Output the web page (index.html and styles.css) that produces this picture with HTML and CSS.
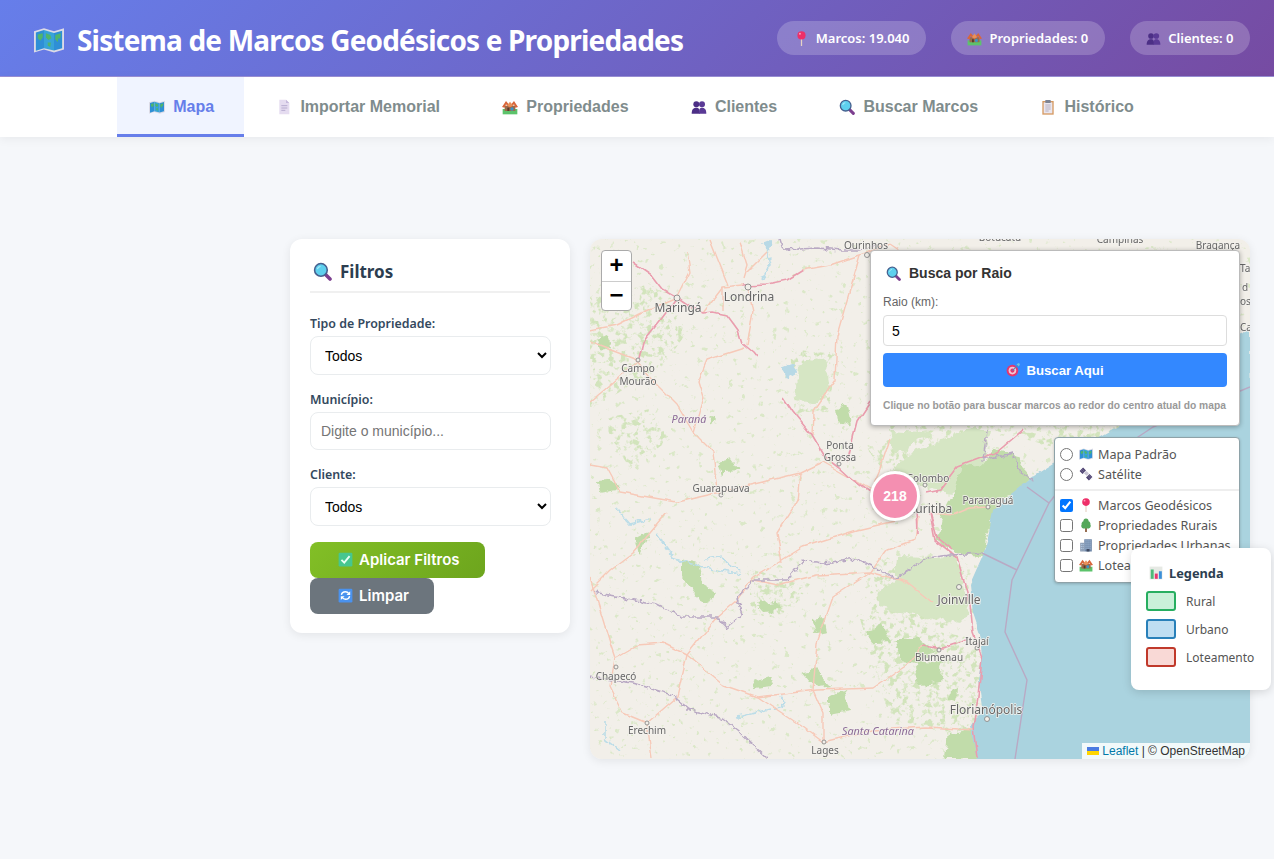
FILE: index.html
```html
<!DOCTYPE html>
<html lang="pt-BR">
<head>
<meta charset="utf-8">
<title>Sistema de Marcos Geodésicos e Propriedades</title>
<link rel="stylesheet" href="styles.css">
</head>
<body>
<svg class="sprites" xmlns="http://www.w3.org/2000/svg" aria-hidden="true">
  <symbol id="i-map" viewBox="0 0 24 24">
    <path fill="#dcdbe6" d="M0 5 8 2.5 16 5 24 2.5V19.5L16 22 8 19.5 0 22Z"/>
    <path fill="#2e8fd6" d="M1.5 6 8 4V18.5L1.5 20.5Z"/>
    <path fill="#38a3d9" d="M8 4 16 6.4V20.4L8 18.5Z"/>
    <path fill="#2e8fd6" d="M16 6.4 22.5 4.5V18.5L16 20.4Z"/>
    <path fill="#4fb56c" d="M3 7.5 7 6.5 7 10 5 12.5 3 10.5ZM9.5 6.5 13 8 14 10.5 11.5 12 9.5 10ZM11 14 13.5 14 13 17.5 11 16.5ZM17 8 21.5 6.5 21 11 19.5 10.5 19 13.5 17 11.5Z"/>
  </symbol>
  <symbol id="i-doc" viewBox="0 0 24 24">
    <path fill="#e5dcf0" d="M5 1H15L20 6V23H5Z"/>
    <path fill="#c6b9dc" d="M15 1 20 6H15Z"/>
    <path stroke="#b4a8cc" stroke-width="1.4" d="M8 10H17M8 13.5H17M8 17H14"/>
  </symbol>
  <symbol id="i-houses" viewBox="0 0 24 24">
    <path fill="#5cc36b" d="M1 15H23V23H1Z"/>
    <path fill="#9a6a4a" d="M4 10H20V18H4Z"/>
    <path fill="#d9663a" d="M0 12 6 3 11 9 13 9 18 3 24 12 20 13 18 8 14 12H10L6 8 4 13Z"/>
    <path fill="#e8925a" d="M9 8 12 4 15 8 16 10 12 12 8 10Z"/>
    <circle cx="15" cy="15" r="2.5" fill="#3a94c8"/>
    <path fill="#5b3a2a" d="M8 13H11V18H8Z"/>
  </symbol>
  <symbol id="i-people" viewBox="0 0 24 24">
    <circle cx="8" cy="8" r="4.5" fill="#4c2f86"/>
    <circle cx="16.5" cy="8" r="4.5" fill="#5a3a96"/>
    <path fill="#4c2f86" d="M1 22C1 15 4 13 8 13S13 15 13 22Z"/>
    <path fill="#5a3a96" d="M12 22C12 15 13 13 16.5 13S23 15 23 22Z"/>
  </symbol>
  <symbol id="i-search" viewBox="0 0 24 24">
    <path stroke="#7c3f8f" stroke-width="4.5" stroke-linecap="round" d="M15.5 15.5 21.5 21.5"/>
    <circle cx="10" cy="10" r="8" fill="#5ed0ee" stroke="#46608f" stroke-width="2"/>
    <path stroke="#a8eafa" stroke-width="1.6" fill="none" d="M5.5 9C6 7 7.5 5.8 9.5 5.5"/>
  </symbol>
  <symbol id="i-clip" viewBox="0 0 24 24">
    <path fill="#d69a62" d="M3.5 3H20.5V23.5H3.5Z"/>
    <path fill="#e9e6ef" d="M5.5 5H18.500V21.500H5.500Z"/>
    <path stroke="#a9a3b8" stroke-width="1.2" d="M8 9H16M8 12H16M8 15H16M8 18H13"/>
    <path fill="#7d8494" d="M8 1.500H16V6H8Z"/>
  </symbol>
  <symbol id="i-pin" viewBox="0 0 24 24">
    <path stroke="#e6d3c5" stroke-width="2" d="M12 10V24"/>
    <circle cx="12" cy="7" r="6.500" fill="#ee2f68"/>
    <circle cx="9.500" cy="4.500" r="1.600" fill="#ff9ab8"/>
  </symbol>
  <symbol id="i-check" viewBox="0 0 24 24">
    <rect x="1" y="1" width="22" height="22" rx="2" fill="#46c690"/>
    <path fill="none" stroke="#e8fff4" stroke-width="3" d="M5.500 12.500 10 17 18.500 6.500"/>
  </symbol>
  <symbol id="i-sync" viewBox="0 0 24 24">
    <rect x="1" y="1" width="22" height="22" rx="2" fill="#4a92ee"/>
    <path fill="none" stroke="#fff" stroke-width="2.200" d="M5.500 11C6 7.500 9 6 12 6 14.500 6 16 7 17.500 9M18.500 13C18 16.500 15 18 12 18 9.500 18 8 17 6.500 15"/>
    <path fill="#fff" d="M19.500 5V11H13.500ZM4.500 19V13H10.500Z"/>
  </symbol>
  <symbol id="i-target" viewBox="0 0 24 24">
    <circle cx="11" cy="13" r="10" fill="#e5366e"/>
    <circle cx="11" cy="13" r="6.500" fill="#f4c7d5"/>
    <circle cx="11" cy="13" r="3.500" fill="#e5366e"/>
    <path stroke="#4a8fb8" stroke-width="1.800" d="M11 13 21 3"/>
    <path fill="#6fc4dc" d="M18 2 22 0 24 2 22 6Z"/>
  </symbol>
  <symbol id="i-sat" viewBox="0 0 24 24">
    <path fill="#4e4272" d="M1 7 7 1 12 6 6 12ZM12 18 18 12 23 17 17 23Z"/>
    <path fill="#c8c4d4" d="M9 11 13 7 17 11 13 15Z"/>
    <path stroke="#8e88a4" stroke-width="1" d="M3.500 5.500 9 11M5.500 3.500 11 9M14.500 15.500 20 21M16.500 13.500 22 19"/>
  </symbol>
  <symbol id="i-tree" viewBox="0 0 24 24">
    <path fill="#8a5a3a" d="M10.500 16H13.500V24H10.500Z"/>
    <path fill="#55a85a" d="M12 1C15 1 16.500 3.500 16.500 5.500 19 6.500 20 9 19.500 11 21 13 20 17 17 18H7C4 17 3 13 4.500 11 4 9 5 6.500 7.500 5.500 7.500 3.500 9 1 12 1Z"/>
  </symbol>
  <symbol id="i-building" viewBox="0 0 24 24">
    <path fill="#8b9bb2" d="M2 8H9V23H2Z"/>
    <path fill="#6f87a8" d="M9 2H22V23H9Z"/>
    <path stroke="#bcd4ee" stroke-width="1.600" stroke-dasharray="2 1.400" d="M12 4V21M15.500 4V21M19 4V21M4 10V21M7 10V21"/>
    <path fill="#3f4a62" d="M13 19H18V23H13Z"/>
  </symbol>
  <symbol id="i-chart" viewBox="0 0 24 24">
    <rect x="1" y="1" width="22" height="22" fill="#e6e9e4"/>
    <path fill="#4dbb78" d="M3 6H8V22H3Z"/>
    <path fill="#e8376f" d="M10 13H15V22H10Z"/>
    <path fill="#3b8fd8" d="M17 9H22V22H17Z"/>
  </symbol>
  <filter id="speckle" x="0" y="0" width="100%" height="100%">
    <feTurbulence type="fractalNoise" baseFrequency="0.16" numOctaves="3" seed="4" result="n"/>
    <feColorMatrix in="n" type="matrix" values="0 0 0 0 0 0 0 0 0 0 0 0 0 0 0 7 0 0 0 -3.700" result="m"/>
    <feComposite in="SourceGraphic" in2="m" operator="in"/>
    <feGaussianBlur stdDeviation="0.5"/>
  </filter>
  <filter id="sparse" x="0" y="0" width="100%" height="100%">
    <feTurbulence type="fractalNoise" baseFrequency="0.16" numOctaves="3" seed="11" result="n"/>
    <feColorMatrix in="n" type="matrix" values="0 0 0 0 0 0 0 0 0 0 0 0 0 0 0 9 0 0 0 -6.000" result="m"/>
    <feComposite in="SourceGraphic" in2="m" operator="in"/>
    <feGaussianBlur stdDeviation="0.5"/>
  </filter>
  <filter id="organic" x="-5%" y="-5%" width="110%" height="110%">
    <feTurbulence type="fractalNoise" baseFrequency="0.09" numOctaves="3" seed="7" result="n"/>
    <feDisplacementMap in="SourceGraphic" in2="n" scale="11" xChannelSelector="R" yChannelSelector="G"/>
    <feGaussianBlur stdDeviation="0.6"/>
  </filter>
  <filter id="wobble" x="-5%" y="-5%" width="110%" height="110%">
    <feTurbulence type="fractalNoise" baseFrequency="0.07" numOctaves="2" seed="3" result="n"/>
    <feDisplacementMap in="SourceGraphic" in2="n" scale="5" xChannelSelector="R" yChannelSelector="G"/>
  </filter>
  <filter id="wiggle" x="-5%" y="-5%" width="110%" height="110%">
    <feTurbulence type="fractalNoise" baseFrequency="0.18" numOctaves="2" seed="9" result="n"/>
    <feDisplacementMap in="SourceGraphic" in2="n" scale="7" xChannelSelector="R" yChannelSelector="G"/>
  </filter>
</svg>
<header class="header">
  <h1 class="title"><svg class="ico ico-title"><use href="#i-map"/></svg>Sistema de Marcos Geodésicos e Propriedades</h1>
  <div class="stats">
    <span class="stat"><svg class="ico ico-stat"><use href="#i-pin"/></svg>Marcos: 19.040</span>
    <span class="stat"><svg class="ico ico-stat"><use href="#i-houses"/></svg>Propriedades: 0</span>
    <span class="stat"><svg class="ico ico-stat"><use href="#i-people"/></svg>Clientes: 0</span>
  </div>
</header>
<nav class="tabs">
  <a class="tab active"><svg class="ico ico-tab"><use href="#i-map"/></svg>Mapa</a>
  <a class="tab"><svg class="ico ico-tab"><use href="#i-doc"/></svg>Importar Memorial</a>
  <a class="tab"><svg class="ico ico-tab"><use href="#i-houses"/></svg>Propriedades</a>
  <a class="tab"><svg class="ico ico-tab"><use href="#i-people"/></svg>Clientes</a>
  <a class="tab"><svg class="ico ico-tab"><use href="#i-search"/></svg>Buscar Marcos</a>
  <a class="tab"><svg class="ico ico-tab"><use href="#i-clip"/></svg>Histórico</a>
</nav>
<main class="main">
  <aside class="filters">
    <h2 class="filters-title"><svg class="ico ico-filter"><use href="#i-search"/></svg>Filtros</h2>
    <label class="field-label">Tipo de Propriedade:</label>
    <select class="field"><option>Todos</option></select>
    <label class="field-label">Município:</label>
    <input class="field field-text" type="text" placeholder="Digite o município...">
    <label class="field-label">Cliente:</label>
    <select class="field"><option>Todos</option></select>
    <button class="btn btn-apply"><svg class="ico ico-btn"><use href="#i-check"/></svg>Aplicar Filtros</button>
    <button class="btn btn-clear"><svg class="ico ico-btn"><use href="#i-sync"/></svg>Limpar</button>
  </aside>
  <section class="map">
    <svg class="tiles" viewBox="0 0 660 520" width="660" height="520" xmlns="http://www.w3.org/2000/svg">
      <rect width="660" height="520" fill="#f2efe9"/>
      <rect width="660" height="520" fill="#dbe8c8" filter="url(#sparse)"/>
      <g class="lite" filter="url(#speckle)">
        <path d="M277 210 320 192 395 190 400 215 367 222 345 250 320 262 300 240Z"/>
        <path d="M285 325 340 315 372 318 385 378 350 390 320 400 275 385Z"/>
        <path d="M440 40 520 30 640 60 660 150 560 190 470 210 400 190 300 190 290 120 340 70Z"/>
        <path d="M0 60 60 45 100 90 70 130 0 170Z"/>
        <path d="M200 110 245 115 240 170 205 175Z"/>
        <path d="M160 330 220 345 195 380 160 375Z"/>
        <path d="M270 380 390 400 390 500 300 480Z"/>
        <path d="M10 180 60 170 80 200 40 230Z"/>
      </g>
      <g class="forest-pale" filter="url(#organic)">
        <path d="M303 231 320 214 347 204 370 191 400 191 393 224 370 228 363 254 337 251 313 234Z"/>
        <path d="M307 318 337 319 360 316 367 318 377 361 380 374 370 384 333 378 290 368 287 354 307 341Z"/>
        <path d="M305 215 330 200 345 195 300 192Z"/>
        <path d="M208 125 235 118 240 150 222 165 205 160Z"/>
      </g>
      <g class="forest" filter="url(#organic)">
        <path d="M350 291 353 274 363 254 370 228 393 224 403 211 423 214 433 228 443 239 430 254 410 261 400 288 393 318 367 316 345 301Z"/>
        <path d="M325 421 353 424 350 444 330 446Z"/>
        <path d="M304 400 330 400 345 412 325 424 310 420Z"/>
        <path d="M358 494 387 490 388 519 355 519Z"/>
        <path d="M93 321 110 324 113 345 127 352 120 364 105 356 93 340Z"/>
        <path d="M223 380 235 378 238 394 226 396Z"/>
        <path d="M277 392 292 384 300 404 285 405Z"/>
        <path d="M128 224 142 220 150 231 136 232 132 238Z"/>
        <path d="M7 242 22 241 27 250 9 253Z"/>
        <path d="M8 100 18 96 21 108 10 112Z"/>
        <path d="M160 442 178 436 183 447 165 449Z"/>
        <path d="M213 432 225 430 240 446 226 448Z"/>
        <path d="M240 458 255 450 260 472 240 476Z"/>
        <path d="M45 300 60 292 48 316Z"/>
        <path d="M167 366 188 362 190 371 172 372Z"/>
        <path d="M247 168 255 165 260 186 249 180Z"/>
        <path d="M360 451 367 449 366 461 359 459Z"/>
        <path d="M120 175 125 182 118 186Z"/>
      </g>
      <g class="water-lines" filter="url(#wiggle)">
        <path d="M27 270 40 285 60 280"/>
        <path d="M67 295 85 320 120 330 150 335"/>
        <path d="M115 320 130 318 150 332"/>
        <path d="M15 480 15 500 30 512"/>
        <path d="M148 478 180 470"/>
        <path d="M190 457 195 465 185 470"/>
        <path d="M175 4 180 25 172 40"/>
      </g>
      <path class="sea" filter="url(#wobble)" d="M660 90 600 120 560 170 480 215 437 242 420 256 403 271 397 304 392 318 380 345 383 374 390 395 392 418 388 440 392 468 380 488 388 525 665 525Z"/>
      <path class="lake" filter="url(#wiggle)" d="M192 128 203 124 207 134 196 140ZM172 4 182 0 180 14Z"/>
      <g class="roads" filter="url(#wobble)">
        <path d="M87 59 53 73 27 86 0 91"/>
        <path d="M0 103 47 121 67 146 87 166 103 193 123 213 127 253"/>
        <path d="M0 163 20 146 47 123"/>
        <path d="M155 109 117 121 108 143 113 159 103 193"/>
        <path d="M158 48 163 73 157 106"/>
        <path d="M133 48 133 71"/>
        <path d="M0 226 17 229 30 253 87 263 127 254 160 246 210 234 233 223"/>
        <path d="M210 234 207 263"/>
        <path d="M270 16 247 96 245 141 223 173 222 196"/>
        <path d="M97 13 100 33 87 59"/>
        <path d="M120 1 138 46"/>
        <path d="M150 3 157 26 153 39"/>
        <path d="M177 13 157 33"/>
        <path d="M113 74 133 48 153 46"/>
        <path d="M213 31 240 26 270 16 300 5"/>
        <path d="M0 338 20 404 25 419 20 448 33 474 57 484 62 519"/>
        <path d="M25 419 47 406 73 404 97 416 133 446 167 458 227 451 283 449 320 424 333 406"/>
        <path d="M97 416 127 378 147 361 163 339 213 308 267 291 310 281 328 261"/>
        <path d="M97 416 87 458 57 484"/>
        <path d="M168 458 213 488 233 503 233 474 223 451 227 404 243 358 280 334 297 311 325 301 328 278"/>
        <path d="M163 341 187 346 227 336 280 333 317 343 343 364"/>
        <path d="M233 503 283 491 337 488 383 491"/>
        <path d="M208 261 187 294 192 324"/>
        <path d="M77 274 43 314 20 331 0 351"/>
        <path d="M233 223 280 250 320 262"/>
        <path d="M340 274 363 276 380 269 398 268"/>
        <path d="M300 5 330 25 335 110 300 170 282 163"/>
        <path d="M280 253 290 230 300 200"/>
      </g>
      <g class="motorways" filter="url(#wobble)">
        <path d="M43 24 63 38 73 51 87 59 100 68 113 74 123 73 137 76 148 91 152 104 163 113 167 118"/>
        <path d="M87 59 72 79 53 103 49 119"/>
        <path d="M153 46 177 45 197 41 213 31"/>
        <path d="M193 158 203 173 220 194 233 216 250 229 263 241 280 253 310 265"/>
        <path d="M280 163 267 183 257 223"/>
        <path d="M340 274 345 301 367 318 380 364 383 394 392 418 388 458 383 488 387 519"/>
        <path d="M326 271 327 294"/>
        <path d="M337 254 350 251 367 228 407 213 433 191"/>
        <path d="M340 274 347 298 363 311"/>
        <path d="M333 406 353 409 377 401"/>
      </g>
      <g class="borders" filter="url(#wiggle)">
        <path d="M190 1 193 11 227 9 253 11 270 11 290 5"/>
        <path d="M3 353 30 358 67 365 93 378 128 378 137 389 153 376 147 359 163 341 197 341 213 321 233 324 267 320 283 328 305 340 337 319 360 316 392 314"/>
        <path d="M397 191 393 221 423 214 430 234 443 241"/>
        <path d="M0 438 43 444 82 456 100 471 130 478 147 491 177 519"/>
      </g>
      <g class="borders">
        <path d="M392 314 427 331"/>
        <path d="M437 248 459 264 422 341 415 393 437 441 425 520"/>
        <path d="M459 264 470 250 563 188 660 148"/>
      </g>
      <g class="cities">
        <circle cx="87" cy="59" r="3"/><circle cx="158" cy="48" r="3"/><circle cx="48" cy="121" r="2"/>
        <circle cx="249" cy="225" r="2"/><circle cx="131" cy="256" r="2"/><circle cx="335" cy="246" r="2"/>
        <circle cx="398" cy="268" r="2"/><circle cx="369" cy="348" r="2.500"/><circle cx="349" cy="411" r="2"/>
        <circle cx="387" cy="409" r="2"/><circle cx="397" cy="480" r="2.500"/><circle cx="26" cy="428" r="2"/>
        <circle cx="57" cy="484" r="2"/><circle cx="234" cy="503" r="2"/><circle cx="277" cy="16" r="2.500"/>
      </g>
      <g class="labels">
        <text x="159" y="62" class="big" text-anchor="middle">Londrina</text>
        <text x="88" y="73" class="big" text-anchor="middle">Maringá</text>
        <text x="48" y="133" text-anchor="middle">Campo</text>
        <text x="48" y="146" text-anchor="middle">Mourão</text>
        <text x="250" y="210" text-anchor="middle">Ponta</text>
        <text x="250" y="222" text-anchor="middle">Grossa</text>
        <text x="131" y="253" text-anchor="middle">Guarapuava</text>
        <text x="338" y="243" text-anchor="middle">Colombo</text>
        <text x="340" y="274" class="big" text-anchor="middle">Curitiba</text>
        <text x="398" y="265" text-anchor="middle">Paranaguá</text>
        <text x="369" y="365" class="big" text-anchor="middle">Joinville</text>
        <text x="387" y="406" text-anchor="middle">Itajaí</text>
        <text x="349" y="422" text-anchor="middle">Blumenau</text>
        <text x="396" y="475" class="big" text-anchor="middle">Florianópolis</text>
        <text x="26" y="441" text-anchor="middle">Chapecó</text>
        <text x="57" y="495" text-anchor="middle">Erechim</text>
        <text x="235" y="515" text-anchor="middle">Lages</text>
        <text x="99" y="184" class="state" text-anchor="middle">Paraná</text>
        <text x="288" y="496" class="state" text-anchor="middle">Santa Catarina</text>
        <text x="276" y="10" text-anchor="middle">Ourinhos</text>
        <text x="410" y="2" text-anchor="middle">Botucatu</text>
        <text x="530" y="4" text-anchor="middle">Campinas</text>
        <text x="628" y="10" text-anchor="middle">Bragança</text>
        <text x="650" y="33">Ta</text>
        <text x="652" y="52">d</text>
        <text x="650" y="66">os</text>
        <text x="650" y="92">Ca</text>
      </g>
    </svg>
    <div class="zoom-control">
      <span class="zoom-btn">+</span>
      <span class="zoom-btn">−</span>
    </div>
    <div class="cluster">218</div>
    <div class="controls-right">
      <div class="radius-panel">
        <h4 class="radius-title"><svg class="ico ico-radius"><use href="#i-search"/></svg>Busca por Raio</h4>
        <label class="radius-label">Raio (km):</label>
        <input class="radius-input" type="text" value="5">
        <button class="radius-btn"><svg class="ico ico-target"><use href="#i-target"/></svg>Buscar Aqui</button>
        <p class="radius-note">Clique no botão para buscar marcos ao redor do centro atual do mapa</p>
      </div>
      <div class="layers">
        <label class="layer"><input type="radio" name="base" class="layer-input"><svg class="ico ico-layer"><use href="#i-map"/></svg><span>Mapa Padrão</span></label>
        <label class="layer"><input type="radio" name="base" class="layer-input"><svg class="ico ico-layer"><use href="#i-sat"/></svg><span>Satélite</span></label>
        <div class="layers-sep"></div>
        <label class="layer"><input type="checkbox" class="layer-input" checked><svg class="ico ico-layer"><use href="#i-pin"/></svg><span>Marcos Geodésicos</span></label>
        <label class="layer"><input type="checkbox" class="layer-input"><svg class="ico ico-layer"><use href="#i-tree"/></svg><span>Propriedades Rurais</span></label>
        <label class="layer"><input type="checkbox" class="layer-input"><svg class="ico ico-layer"><use href="#i-building"/></svg><span>Propriedades Urbanas</span></label>
        <label class="layer"><input type="checkbox" class="layer-input"><svg class="ico ico-layer"><use href="#i-houses"/></svg><span>Loteamentos</span></label>
      </div>
    </div>
    <div class="attribution"><span class="flag"><i class="flag-blue"></i><i class="flag-yellow"></i></span> <a class="attr-link">Leaflet</a> | © OpenStreetMap</div>
  </section>
  <aside class="legend">
    <h4 class="legend-title"><svg class="ico ico-legend"><use href="#i-chart"/></svg>Legenda</h4>
    <div class="legend-row"><span class="swatch swatch-rural"></span>Rural</div>
    <div class="legend-row"><span class="swatch swatch-urban"></span>Urbano</div>
    <div class="legend-row"><span class="swatch swatch-lot"></span>Loteamento</div>
  </aside>
</main>
</body>
</html>
```

FILE: styles.css
```css
* { box-sizing: border-box; }
html, body { margin: 0; height: 100%; }
body {
  background: #f5f7fa;
  font-family: "Noto Sans", "Open Sans", sans-serif;
  overflow: hidden;
  position: relative;
}
.sprites { position: absolute; width: 0; height: 0; overflow: hidden; }
.ico { display: block; flex: none; }
.ico-title { width: 30px; height: 30px; margin-right: 13px; }
.ico-stat { width: 15px; height: 15px; margin-right: 7px; }
.ico-tab { width: 16px; height: 16px; margin: 0 8px 0 3px; }
.ico-filter { width: 19px; height: 19px; margin-right: 8px; }
.ico-btn { width: 15px; height: 15px; margin-right: 6px; }
.ico-radius { width: 15px; height: 15px; margin-right: 8px; }
.ico-target { width: 14px; height: 14px; margin-right: 6px; }
.ico-layer { width: 14px; height: 14px; margin-right: 5px; }
.ico-legend { width: 14px; height: 14px; margin-right: 6px; }
.header {
  height: 77px;
  padding: 0 24px 0 34px;
  display: flex;
  align-items: center;
  justify-content: space-between;
  background: linear-gradient(135deg, #667eea 0%, #764ba2 100%);
  color: #fff;
  border-bottom: 1px solid #9a90d6;
}
.title {
  display: flex;
  align-items: center;
  margin: 4px 0 0;
  font-size: 28px;
  font-weight: 700;
  letter-spacing: -0.83px;
  white-space: nowrap;
}
.stats { display: flex; gap: 25px; }
.stat {
  height: 34px;
  padding: 0 16.500px;
  display: flex;
  align-items: center;
  border-radius: 20px;
  background: rgba(255, 255, 255, 0.2);
  font-size: 13px;
  font-weight: 600;
}
.tabs {
  height: 60px;
  display: flex;
  justify-content: center;
  padding-left: 6px;
  background: #fff;
  box-shadow: 0 2px 10px rgba(0, 0, 0, 0.06);
}
.tab {
  display: flex;
  align-items: center;
  padding: 3px 29.670px 0;
  font-family: "Liberation Sans", Arial, sans-serif;
  font-size: 16px;
  font-weight: 700;
  color: #7f8c8d;
  border-bottom: 3px solid transparent;
}
.tab.active { color: #667eea; background: #f0f4ff; border-bottom-color: #667eea; }
.main {
  display: flex;
  justify-content: flex-end;
  align-items: flex-start;
  gap: 20px;
  padding: 102px 24px 0;
}
.filters {
  width: 280px;
  padding: 20px 20px 19px;
  background: #fff;
  border-radius: 12px;
  box-shadow: 0 2px 10px rgba(0, 0, 0, 0.08);
}
.filters-title {
  display: flex;
  align-items: center;
  margin: 0 0 20px;
  padding: 0 0 7px 3px;
  font-size: 17px;
  line-height: 25px;
  font-weight: 700;
  color: #2c3e50;
  border-bottom: 2px solid #f0f0f0;
}
.field-label {
  display: block;
  margin-bottom: 4px;
  padding-top: 2px;
  font-size: 12.4px;
  line-height: 17px;
  font-weight: 600;
  color: #34495e;
}
.field {
  display: block;
  width: 241px;
  height: 39px;
  margin-bottom: 14px;
  padding: 0 10px;
  font-family: "Liberation Sans", Arial, sans-serif;
  font-size: 14px;
  color: #000;
  background: #fff;
  border: 1.5px solid #e9ecee;
  border-radius: 8px;
}
.field-text { height: 38px; }
.field-text::placeholder { color: #757575; }
.btn {
  display: flex;
  align-items: center;
  width: fit-content;
  height: 36px;
  padding: 0 25px 1px 28px;
  border: 0;
  border-radius: 8px;
  color: #fff;
  font-family: "Inter", "Noto Sans", sans-serif;
  font-size: 15px;
  font-weight: 600;
}
.btn-apply { margin-top: 16px; background: linear-gradient(135deg, #82bf26 0%, #6da51d 100%); }
.btn-clear { background: #6c757d; }
.map {
  position: relative;
  width: 660px;
  height: 520px;
  border-radius: 12px;
  overflow: hidden;
  box-shadow: 0 2px 10px rgba(0, 0, 0, 0.08);
  font-family: "Liberation Sans", Arial, sans-serif;
}
.tiles { display: block; filter: blur(0.35px); }
.lite path { fill: #d2e4bc; }
.forest-pale path { fill: #d6e6c4; }
.forest path { fill: #c1dcaa; }
.sea { fill: #aad3df; }
.lake { fill: #b8d9e6; }
.water-lines path { fill: none; stroke: #bcdde8; stroke-width: 1.6; }
.roads path { fill: none; stroke: #f7c9b8; stroke-width: 1.4; stroke-linejoin: round; }
.motorways path { fill: none; stroke: #ea9dae; stroke-width: 1.6; stroke-linejoin: round; }
.borders path { fill: none; stroke: #b9a9c4; stroke-width: 1.4; stroke-linejoin: round; }
.cities circle { fill: #f2efe9; stroke: #8a8a8a; stroke-width: 0.9; }
.labels text {
  font-family: "Noto Sans", sans-serif;
  font-size: 10px;
  fill: #666;
  stroke: #f4f2ee;
  stroke-width: 1.5px;
  paint-order: stroke;
}
.labels .big { font-size: 12px; }
.labels .state { font-style: italic; fill: #8c6b96; font-size: 10.8px; }
.zoom-control {
  position: absolute;
  top: 11px;
  left: 11px;
  width: 31px;
  display: flex;
  flex-direction: column;
  background: #fff;
  border: 1px solid #aaa;
  border-radius: 4px;
  overflow: hidden;
}
.zoom-btn {
  height: 30px;
  padding-bottom: 2px;
  display: flex;
  align-items: center;
  justify-content: center;
  font-size: 24px;
  font-weight: 700;
  color: #000;
}
.zoom-btn + .zoom-btn { height: 29px; border-top: 1px solid #ccc; }
.cluster {
  position: absolute;
  left: 280px;
  top: 232px;
  width: 50px;
  height: 50px;
  display: flex;
  align-items: center;
  justify-content: center;
  border: 3px solid #fff;
  border-radius: 50%;
  background: #f48fb1;
  color: #fff;
  font-size: 14px;
  font-weight: 700;
  box-shadow: 0 1px 5px rgba(0, 0, 0, 0.3);
}
.controls-right {
  position: absolute;
  top: 11px;
  right: 10px;
  display: flex;
  flex-direction: column;
  align-items: flex-end;
  gap: 11px;
}
.radius-panel {
  width: 370px;
  height: 176px;
  padding: 14px 12px;
  background: #fff;
  border: 1px solid #bbb;
  border-radius: 4px;
  box-shadow: 0 1px 5px rgba(0, 0, 0, 0.3);
}
.radius-title {
  display: flex;
  align-items: center;
  margin: 0 0 13px 3px;
  font-size: 14px;
  line-height: 17px;
  font-weight: 700;
  color: #333;
}
.radius-label { display: block; margin-bottom: 5px; font-size: 12px; line-height: 15px; color: #666; }
.radius-input {
  display: block;
  width: 100%;
  height: 31px;
  padding: 0 8px;
  font-family: inherit;
  font-size: 14px;
  color: #000;
  border: 1px solid #ddd;
  border-radius: 4px;
}
.radius-btn {
  display: flex;
  align-items: center;
  justify-content: center;
  width: 100%;
  height: 34px;
  margin-top: 7px;
  padding-top: 1px;
  border: 0;
  border-radius: 4px;
  background: #3388ff;
  color: #fff;
  font-family: inherit;
  font-size: 13.2px;
  font-weight: 700;
}
.radius-note { margin: 13px 0 0; font-size: 10.25px; line-height: 12px; color: #999; font-weight: 700; white-space: nowrap; }
.layers {
  width: 186px;
  height: 146px;
  padding: 6px 5px;
  background: #fff;
  border: 1px solid #8ea2a8;
  border-radius: 4px;
  box-shadow: 0 1px 3px rgba(0, 0, 0, 0.2);
  font-family: "Noto Sans", sans-serif;
  font-size: 12.6px;
  color: #555;
}
.layer { display: flex; align-items: center; height: 20px; white-space: nowrap; }
.layer-input { width: 13px; height: 13px; margin: 0 6px 0 0; flex: none; }
.layers-sep { height: 2px; margin: 5px -5px 4px; background: #eee; }
.attribution {
  position: absolute;
  right: 0;
  bottom: 0;
  height: 16px;
  line-height: 16px;
  padding: 0 5px;
  background: rgba(255, 255, 255, 0.85);
  font-size: 12px;
  color: #333;
  white-space: nowrap;
}
.attr-link { color: #0078a8; }
.flag { display: inline-flex; flex-direction: column; width: 12px; height: 8px; vertical-align: middle; margin-bottom: 2px; }
.flag-blue { flex: 1; background: #4c7be1; }
.flag-yellow { flex: 1; background: #ffd500; }
.legend {
  position: absolute;
  left: 1131px;
  top: 548px;
  width: 140px;
  height: 142px;
  padding: 16px 15px;
  background: #fff;
  border-radius: 8px;
  box-shadow: 0 2px 10px rgba(0, 0, 0, 0.15);
}
.legend-title {
  display: flex;
  align-items: center;
  margin: 0 0 9px;
  padding-left: 3px;
  font-size: 12.8px;
  line-height: 18px;
  font-weight: 700;
  color: #2c3e50;
}
.legend-row { display: flex; align-items: center; gap: 10px; height: 20px; margin-bottom: 8px; font-size: 12px; color: #555; white-space: nowrap; }
.swatch { width: 30px; height: 20px; flex: none; border: 2px solid; border-radius: 3px; }
.swatch-rural { background: #c9f0d9; border-color: #27ae60; }
.swatch-urban { background: #bfdef2; border-color: #2980b9; }
.swatch-lot { background: #f9d9d6; border-color: #c0392b; }
```
